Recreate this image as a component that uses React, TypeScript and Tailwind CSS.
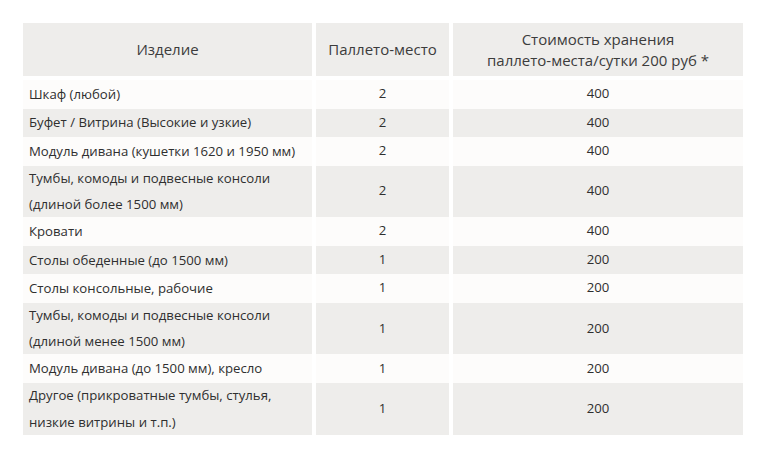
import React from "react";

type Row = { name: string[]; p: string; c: string; h: string; gray: boolean };

const rows: Row[] = [
  { name: ["Шкаф (любой)"], p: "2", c: "400", h: "h-[28.7px]", gray: false },
  { name: ["Буфет / Витрина (Высокие и узкие)"], p: "2", c: "400", h: "h-[28px]", gray: true },
  { name: ["Модуль дивана (кушетки 1620 и 1950 мм)"], p: "2", c: "400", h: "h-[29px]", gray: false },
  { name: ["Тумбы, комоды и подвесные консоли", "(длиной более 1500 мм)"], p: "2", c: "400", h: "h-[51px]", gray: true },
  { name: ["Кровати"], p: "2", c: "400", h: "h-[29.3px]", gray: false },
  { name: ["Столы обеденные (до 1500 мм)"], p: "1", c: "200", h: "h-[28px]", gray: true },
  { name: ["Столы консольные, рабочие"], p: "1", c: "200", h: "h-[28.7px]", gray: false },
  { name: ["Тумбы, комоды и подвесные консоли", "(длиной менее 1500 мм)"], p: "1", c: "200", h: "h-[51.6px]", gray: true },
  { name: ["Модуль дивана (до 1500 мм), кресло"], p: "1", c: "200", h: "h-[28.4px]", gray: false },
  { name: ["Другое (прикроватные тумбы, стулья,", "низкие витрины и т.п.)"], p: "1", c: "200", h: "h-[52.3px]", gray: true },
];

export default function App() {
  return (
    <div
      className="w-[768px] h-[458px] bg-white pl-[23px] pt-[23px] text-[#2f2f2f]"
      style={{ fontFamily: '"Open Sans", "Noto Sans", sans-serif' }}
    >
      <div className="flex gap-[4px] h-[53px] text-[15px] text-[#3c3c3c]">
        <div className="w-[289px] bg-[#eeedeb] flex items-center justify-center">Изделие</div>
        <div className="w-[133px] bg-[#eeedeb] flex items-center justify-center">Паллето-место</div>
        <div className="w-[290px] bg-[#eeedeb] flex flex-col items-center justify-center leading-[21px] text-center">
          <span>Стоимость хранения</span>
          <span>паллето-места/сутки 200 руб *</span>
        </div>
      </div>
      <div className="mt-[4px] flex flex-col text-[13.2px]">
        {rows.map((r, i) => {
          const bg = r.gray ? "bg-[#eeedeb]" : "bg-[#fdfcfb]";
          return (
            <div key={i} className={`flex gap-[4px] ${r.h}`}>
              <div className={`w-[289px] ${bg} flex flex-col justify-center pl-[6px] leading-[26.5px]`}>
                {r.name.map((n, j) => (
                  <span key={j}>{n}</span>
                ))}
              </div>
              <div className={`w-[133px] ${bg} flex items-center justify-center`}>{r.p}</div>
              <div className={`w-[290px] ${bg} flex items-center justify-center`}>{r.c}</div>
            </div>
          );
        })}
      </div>
    </div>
  );
}
